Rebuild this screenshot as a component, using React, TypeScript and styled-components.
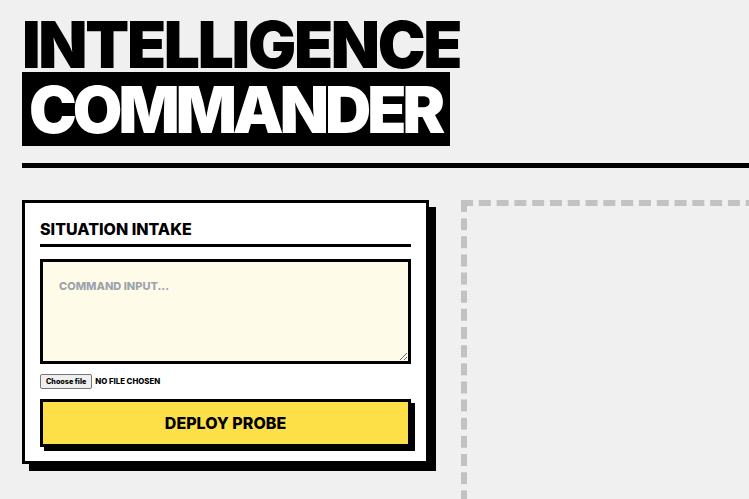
import React from 'react';
import styled, { createGlobalStyle } from 'styled-components';

const GlobalStyle = createGlobalStyle`
  html, body {
    margin: 0;
    padding: 0;
    background: #f0f0f0;
    overflow: hidden;
  }
  * {
    box-sizing: border-box;
  }
`;

const Page = styled.div`
  width: 1100px;
  padding: 18px 22px 0;
  font-family: Inter, 'Liberation Sans', sans-serif;
  color: #000;
`;

const Header = styled.header`
  padding-bottom: 17px;
  border-bottom: 5px solid #000;
  margin-bottom: 32px;
`;

const Title = styled.h1`
  margin: 0;
  font-size: 64px;
  font-weight: 900;
  line-height: 0.85;
  text-transform: uppercase;
`;

const TitleLine = styled.span`
  display: block;
  letter-spacing: -2.3px;
`;

const TitleHighlight = styled.span`
  display: inline-block;
  background: #000;
  color: #fff;
  letter-spacing: -4px;
  padding: 11px 9px 8px 7px;
`;

const Workspace = styled.main`
  display: grid;
  grid-template-columns: 407px 1fr;
  gap: 32px;
  align-items: start;
`;

const Card = styled.section`
  background: #fff;
  border: 3px solid #000;
  box-shadow: 7px 7px 0 #000;
  padding: 17px 15px 14px;
  display: flex;
  flex-direction: column;
`;

const CardTitle = styled.h2`
  margin: 0 0 12px;
  padding-bottom: 6px;
  border-bottom: 3px solid #000;
  font-size: 16px;
  font-weight: 800;
  line-height: 18px;
  text-transform: uppercase;
`;

const CommandInput = styled.textarea`
  display: block;
  width: 100%;
  height: 105px;
  border: 3px solid #000;
  border-radius: 0;
  background: #fefce8;
  padding: 16px;
  font-family: Inter, 'Liberation Sans', sans-serif;
  font-size: 11px;
  font-weight: 800;
  line-height: 1.5;
  text-transform: uppercase;
  outline: none;

  &::placeholder {
    color: #9ca3af;
  }
`;

const FileRow = styled.label`
  display: flex;
  align-items: center;
  gap: 3px;
  margin: 10px 0;
  cursor: pointer;
`;

const HiddenFile = styled.input`
  position: absolute;
  width: 1px;
  height: 1px;
  opacity: 0;
  pointer-events: none;
`;

const FileButton = styled.span`
  display: inline-flex;
  align-items: center;
  height: 15px;
  padding: 0 5px;
  background: #efefef;
  border: 1px solid #767676;
  border-radius: 2px;
  font-size: 7.2px;
  font-weight: 800;
  color: #000;
`;

const FileStatus = styled.span`
  font-size: 7.8px;
  font-weight: 800;
  text-transform: uppercase;
`;

const DeployButton = styled.button`
  width: 100%;
  height: 48px;
  border: 3px solid #000;
  border-radius: 0;
  background: #fde047;
  box-shadow: 4px 4px 0 #000;
  font-family: Inter, 'Liberation Sans', sans-serif;
  font-size: 16px;
  font-weight: 800;
  text-transform: uppercase;
  color: #000;
  cursor: pointer;
`;

const OutputZone = styled.section`
  min-height: 520px;
  border: 6px dashed #c2c2c2;
`;

export default function App() {
  return (
    <>
      <GlobalStyle />
      <Page>
        <Header>
          <Title>
            <TitleLine>Intelligence</TitleLine>
            <TitleHighlight>Commander</TitleHighlight>
          </Title>
        </Header>
        <Workspace>
          <Card>
            <CardTitle>Situation Intake</CardTitle>
            <CommandInput placeholder="Command input..." />
            <FileRow>
              <HiddenFile type="file" />
              <FileButton>Choose file</FileButton>
              <FileStatus>No file chosen</FileStatus>
            </FileRow>
            <DeployButton>Deploy Probe</DeployButton>
          </Card>
          <OutputZone />
        </Workspace>
      </Page>
    </>
  );
}
